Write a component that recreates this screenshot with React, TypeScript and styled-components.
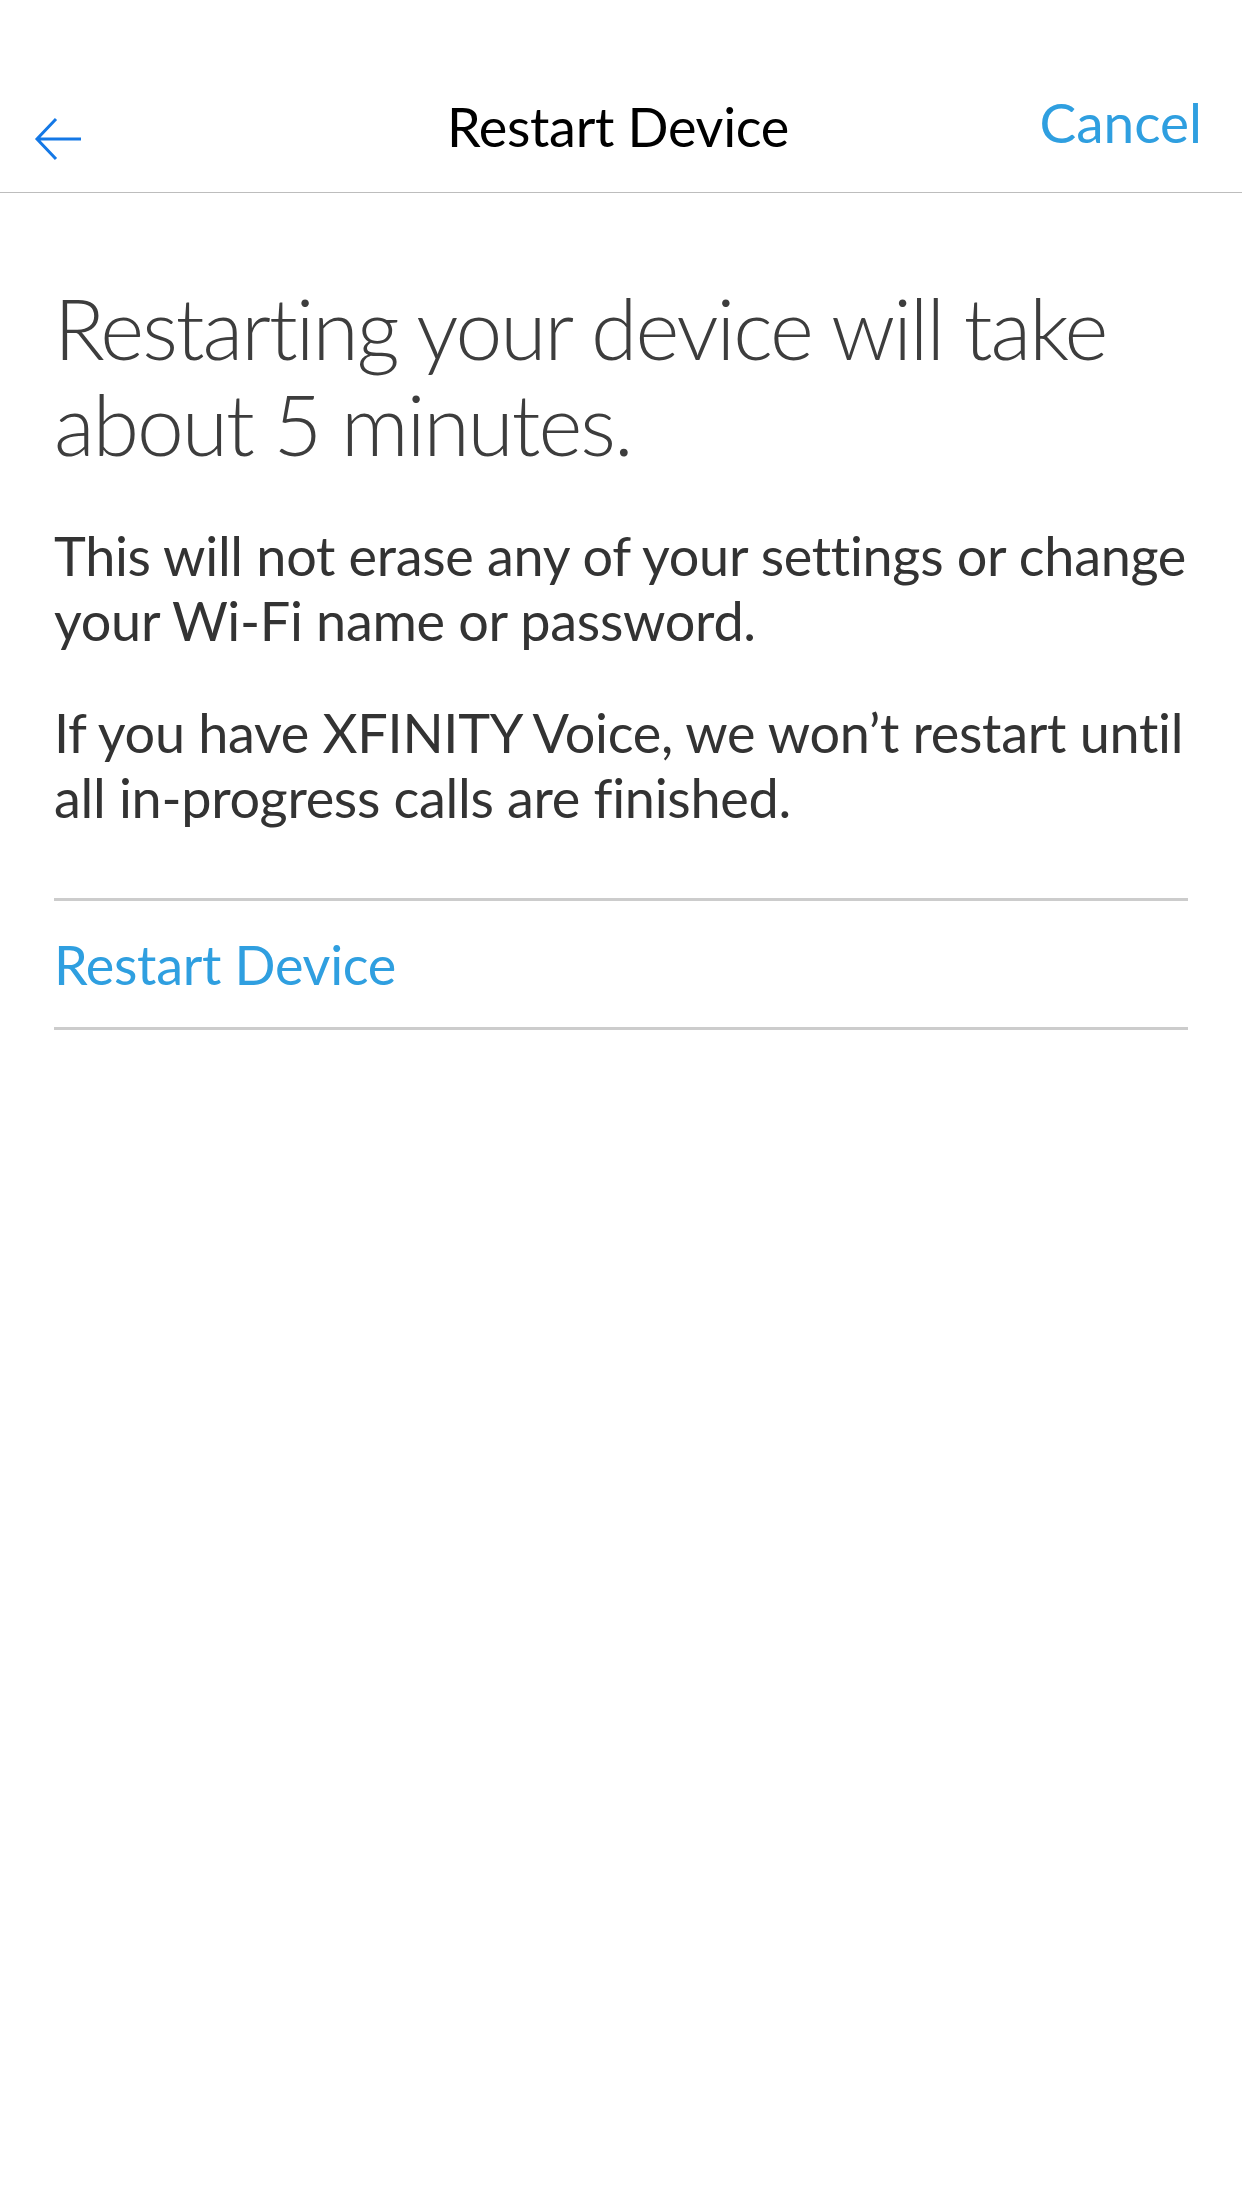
import React from "react";
import styled, { createGlobalStyle } from "styled-components";

const Global = createGlobalStyle`
  html, body { margin: 0; padding: 0; background: #ffffff; }
  body { font-family: Lato, "Open Sans", "Liberation Sans", sans-serif; }
`;

const Screen = styled.div`
  width: 1242px;
  min-height: 2208px;
  background: #ffffff;
`;

const NavBar = styled.header`
  display: grid;
  grid-template-columns: 1fr auto 1fr;
  align-items: center;
  box-sizing: border-box;
  height: 193px;
  padding: 60px 40px 0 34px;
  border-bottom: 1.5px solid #bdbdbd;
`;

const BackButton = styled.button`
  justify-self: start;
  display: flex;
  align-items: center;
  padding: 0;
  margin: 0;
  border: none;
  background: none;
  color: #1478e6;
  cursor: pointer;
  margin-top: 26px;
`;

const Title = styled.h1`
  margin: 0;
  font-size: 54px;
  font-weight: 400;
  color: #000000;
  letter-spacing: -0.3px;
`;

const CancelButton = styled.button`
  justify-self: end;
  padding: 0;
  border: none;
  background: none;
  font-family: inherit;
  font-size: 55px;
  font-weight: 400;
  color: #2f9fe0;
  letter-spacing: 0px;
  cursor: pointer;
  margin-top: -9px;
`;

const Content = styled.main`
  padding: 0 54px;
`;

const Heading = styled.h2`
  margin: 87px 0 0 0;
  font-size: 84px;
  line-height: 96px;
  font-weight: 300;
  color: #3d3d3d;
  letter-spacing: -2px;
`;

const Paragraph = styled.p`
  margin: 51px 0 0 0;
  font-size: 54px;
  line-height: 65px;
  font-weight: 400;
  color: #333333;
  letter-spacing: -0.3px;
  & + & {
    margin-top: 47px;
  }
`;

const ActionList = styled.div`
  margin-top: 68px;
  border-top: 3px solid #cccccc;
  border-bottom: 3px solid #cccccc;
`;

const ActionRow = styled.button`
  display: flex;
  align-items: center;
  width: 100%;
  height: 126px;
  padding: 0;
  border: none;
  background: none;
  font-family: inherit;
  font-size: 54px;
  font-weight: 400;
  color: #2f9fe0;
  letter-spacing: -0.3px;
  text-align: left;
  cursor: pointer;
`;

const BackArrow = () => (
  <svg width="50" height="44" viewBox="0 0 50 44" fill="none">
    <path d="M47 22 H3 M22 2 L3 22 L22 42" stroke="currentColor" strokeWidth="3" strokeLinecap="butt" strokeLinejoin="miter" />
  </svg>
);

export default function App() {
  return (
    <>
      <Global />
      <Screen>
        <NavBar>
          <BackButton aria-label="Back">
            <BackArrow />
          </BackButton>
          <Title>Restart Device</Title>
          <CancelButton>Cancel</CancelButton>
        </NavBar>
        <Content>
          <Heading>Restarting your device will take about 5 minutes.</Heading>
          <Paragraph>
            This will not erase any of your settings or change your Wi-Fi name or password.
          </Paragraph>
          <Paragraph>
            If you have XFINITY Voice, we won’t restart until all in-progress calls are finished.
          </Paragraph>
          <ActionList>
            <ActionRow>Restart Device</ActionRow>
          </ActionList>
        </Content>
      </Screen>
    </>
  );
}
